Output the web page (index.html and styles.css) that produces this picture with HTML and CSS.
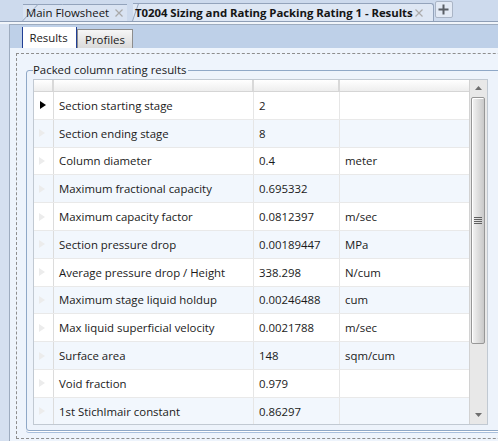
FILE: index.html
```html
<!DOCTYPE html>
<html>
<head>
<meta charset="utf-8">
<link rel="stylesheet" href="styles.css">
</head>
<body>
<div class="doctabs">
  <div class="dtab main"><span class="dlabel">Main Flowsheet</span><svg class="x" width="8" height="8" viewBox="0 0 8 8"><path d="M0.5 0.5L7.5 7.5M7.5 0.5L0.5 7.5" stroke="#a9a9a9" stroke-width="1.2" fill="none"/></svg></div>
  <div class="dtab active"><span class="dlabel bold">T0204 Sizing and Rating Packing Rating 1 - Results</span><svg class="x" width="8" height="8" viewBox="0 0 8 8"><path d="M0.5 0.5L7.5 7.5M7.5 0.5L0.5 7.5" stroke="#ababab" stroke-width="1.2" fill="none"/></svg></div>
  <div class="plus"><svg width="11" height="11" viewBox="0 0 11 11"><path d="M5.5 0.5V10.5M0.5 5.5H10.5" stroke="#5a5f66" stroke-width="2" fill="none"/></svg></div>
</div>
<div class="gap"></div>
<div class="frame">
  <div class="innertabs">
    <div class="itab sel">Results</div>
    <div class="itab">Profiles</div>
  </div>
  <div class="content">
    <div class="dashed">
      <fieldset class="group">
        <legend>Packed column rating results</legend>
        <div class="grid">
          <div class="table">
            <div class="row head"><div class="c rh"></div><div class="c c1"></div><div class="c c2"></div><div class="c c3"></div></div>
            <div class="row"><div class="c rh"><span class="arrow cur"></span></div><div class="c c1">Section starting stage</div><div class="c c2">2</div><div class="c c3"></div></div>
            <div class="row alt"><div class="c rh"><span class="arrow"></span></div><div class="c c1">Section ending stage</div><div class="c c2">8</div><div class="c c3"></div></div>
            <div class="row"><div class="c rh"><span class="arrow"></span></div><div class="c c1">Column diameter</div><div class="c c2">0.4</div><div class="c c3">meter</div></div>
            <div class="row alt"><div class="c rh"><span class="arrow"></span></div><div class="c c1">Maximum fractional capacity</div><div class="c c2">0.695332</div><div class="c c3"></div></div>
            <div class="row"><div class="c rh"><span class="arrow"></span></div><div class="c c1">Maximum capacity factor</div><div class="c c2">0.0812397</div><div class="c c3">m/sec</div></div>
            <div class="row alt"><div class="c rh"><span class="arrow"></span></div><div class="c c1">Section pressure drop</div><div class="c c2">0.00189447</div><div class="c c3">MPa</div></div>
            <div class="row"><div class="c rh"><span class="arrow"></span></div><div class="c c1">Average pressure drop / Height</div><div class="c c2">338.298</div><div class="c c3">N/cum</div></div>
            <div class="row alt"><div class="c rh"><span class="arrow"></span></div><div class="c c1">Maximum stage liquid holdup</div><div class="c c2">0.00246488</div><div class="c c3">cum</div></div>
            <div class="row"><div class="c rh"><span class="arrow"></span></div><div class="c c1">Max liquid superficial velocity</div><div class="c c2">0.0021788</div><div class="c c3">m/sec</div></div>
            <div class="row alt"><div class="c rh"><span class="arrow"></span></div><div class="c c1">Surface area</div><div class="c c2">148</div><div class="c c3">sqm/cum</div></div>
            <div class="row"><div class="c rh"><span class="arrow"></span></div><div class="c c1">Void fraction</div><div class="c c2">0.979</div><div class="c c3"></div></div>
            <div class="row alt"><div class="c rh"><span class="arrow"></span></div><div class="c c1">1st Stichlmair constant</div><div class="c c2">0.86297</div><div class="c c3"></div></div>
          </div>
          <div class="scrollbar">
            <div class="sbtn"><svg width="7" height="4" viewBox="0 0 7 4"><path d="M0 4L3.5 0L7 4Z" fill="#6e6e6e"/></svg></div>
            <div class="thumb"><div class="grip"><i></i><i></i><i></i><i></i></div></div>
            <div class="sfill"></div>
            <div class="sbtn down"><svg width="7" height="4" viewBox="0 0 7 4"><path d="M0 0L7 0L3.5 4Z" fill="#6e6e6e"/></svg></div>
          </div>
        </div>
      </fieldset>
    </div>
  </div>
</div>
</body>
</html>
```
FILE: styles.css
```css
html, body {
  margin: 0;
  padding: 0;
}
body {
  width: 498px;
  height: 441px;
  overflow: hidden;
  background: #d5e0f0;
  font-family: "Open Sans", "Noto Sans", sans-serif;
  font-size: 11.4px;
  color: #1a1a1a;
}

/* document tabs */
.doctabs {
  height: 21px;
  background: #cddaed;
  border-bottom: 1px solid #8e9eb6;
  display: flex;
  align-items: flex-end;
  padding-left: 23px;
  overflow: hidden;
}
.dtab {
  position: relative;
  height: 17px;
  display: flex;
  align-items: center;
  border-top: 1px solid #93a3bb;
  background: #d9e3f2;
  white-space: nowrap;
}
.dtab::before {
  content: "";
  position: absolute;
  left: -1px;
  top: -1px;
  bottom: 0;
  width: 24px;
  background: inherit;
  border-left: 1px solid #93a3bb;
  border-top: 1px solid #93a3bb;
  transform-origin: 0 100%;
  transform: skewX(-43deg);
  z-index: 0;
}
.dtab > * {
  position: relative;
  z-index: 1;
}
.main {
  width: 104px;
  padding-left: 3px;
  box-sizing: border-box;
  z-index: 1;
}
.main .x {
  margin-left: 6px;
}
.active {
  margin-left: 6px;
  padding-left: 2px;
  padding-right: 10px;
  border-right: 1px solid #93a3bb;
  border-top-right-radius: 3px;
  background: #dee7f4;
  z-index: 2;
}
.active::before {
  transform: skewX(-19deg);
  width: 14px;
}
.active .x {
  margin-left: 2px;
}
.bold {
  font-weight: bold;
  letter-spacing: -0.05px;
}
.dlabel {
  line-height: 16px;
  color: #151515;
}
.plus {
  width: 16px;
  height: 15px;
  margin-left: 1px;
  margin-bottom: 3px;
  border: 1px solid #aab5c6;
  border-radius: 2px;
  background: #e3eaf5;
  display: flex;
  align-items: center;
  justify-content: center;
}
.gap {
  height: 2px;
  background: #f1f5fa;
}

/* main frame (right part is cut off by the window edge) */
.frame {
  margin-left: 9px;
  width: 489px;
  height: 417px;
  overflow: hidden;
  border-left: 1px solid #9eacbf;
  border-top: 1px solid #9eacbf;
  background: #eef4fc;
}
.innertabs {
  height: 23px;
  background: #bed0e8;
  display: flex;
  align-items: flex-end;
  padding-left: 12px;
}
.itab {
  box-sizing: border-box;
  display: flex;
  align-items: center;
  justify-content: center;
  height: 19px;
  width: 56px;
  border: 1px solid #8d8d8d;
  border-bottom: none;
  background: linear-gradient(#f6f6f6, #dadada);
  color: #1a1a1a;
}
.itab.sel {
  height: 21px;
  width: 55px;
  background: #ffffff;
  border: none;
  border-left: 1px solid #213f95;
  border-right: 1px solid #213f95;
  padding-bottom: 1px;
  padding-right: 2px;
}

.content {
  padding: 5px 0 0 6px;
  width: 540px;
  height: 400px;
}
.dashed {
  box-sizing: border-box;
  height: 386px;
  border: 1px dashed #8e8e8e;
  padding: 8px 0 0 9px;
}

/* group box */
.group {
  margin: 0;
  width: 520px;
  border: 1px solid #8fa8c7;
  border-radius: 3px;
  padding: 1px 0 5px 6px;
  box-shadow: 0 1px 0 #ffffff, 0 2px 0 #a8bedb;
  background: #edf3fb;
}
.group legend {
  padding: 0 2px 0 0;
  line-height: 16px;
  color: #1a1a1a;
}

/* grid */
.grid {
  width: 455px;
  height: 346px;
  box-sizing: border-box;
  border: 1px solid #c1c9d2;
  display: flex;
  background: #ffffff;
}
.table {
  width: 435px;
  overflow: hidden;
}
.row {
  display: flex;
  height: 27.8px;
  box-sizing: border-box;
  border-bottom: 1px solid #e9e9e9;
  background: #ffffff;
}
.row.alt {
  background: #f2f7fd;
}
.row.head {
  height: 12px;
  border-bottom: 1px solid #d5d5d5;
  background: linear-gradient(#ffffff, #eeeeee);
}
.c {
  box-sizing: border-box;
  display: flex;
  align-items: center;
  white-space: nowrap;
  overflow: hidden;
  color: #1a1a1a;
  border-right: 1px solid #e6e6e6;
}
.head .c {
  border-right: 2px solid #d9d9d9;
}
.rh { width: 20px; padding-left: 5px; border-right-color: #dcdcdc; }
.c1 { width: 200px; padding-left: 5px; }
.c2 { width: 86px; padding-left: 5px; }
.c3 { width: 129px; padding-left: 5px; border-right: none; }
.head .c3 { border-right: none; }

.arrow {
  width: 0;
  height: 0;
  border-top: 4px solid transparent;
  border-bottom: 4px solid transparent;
  border-left: 6px solid #ececec;
}
.arrow.cur {
  border-left-color: #000000;
  margin-left: 1px;
}

/* scrollbar */
.scrollbar {
  width: 18px;
  box-sizing: border-box;
  border-left: 1px solid #d2d2d2;
  background: #e8e8e8;
  display: flex;
  flex-direction: column;
}
.sbtn {
  height: 16px;
  display: flex;
  align-items: center;
  justify-content: center;
  flex: none;
}
.sbtn.down {
  height: 18px;
}
.thumb {
  margin: 1px 2px 0 1px;
  height: 245px;
  flex: none;
  border: 1px solid #979797;
  border-radius: 2px;
  background: linear-gradient(to right, #f4f4f4, #dcdcdc 55%, #c9c9c9);
  box-shadow: inset 1px 1px 0 #ffffff;
  display: flex;
  align-items: center;
  justify-content: center;
}
.grip {
  display: flex;
  flex-direction: column;
  gap: 1px;
}
.grip i {
  display: block;
  width: 8px;
  height: 1px;
  background: #5f5f5f;
}
.sfill {
  flex: 1;
}
```
